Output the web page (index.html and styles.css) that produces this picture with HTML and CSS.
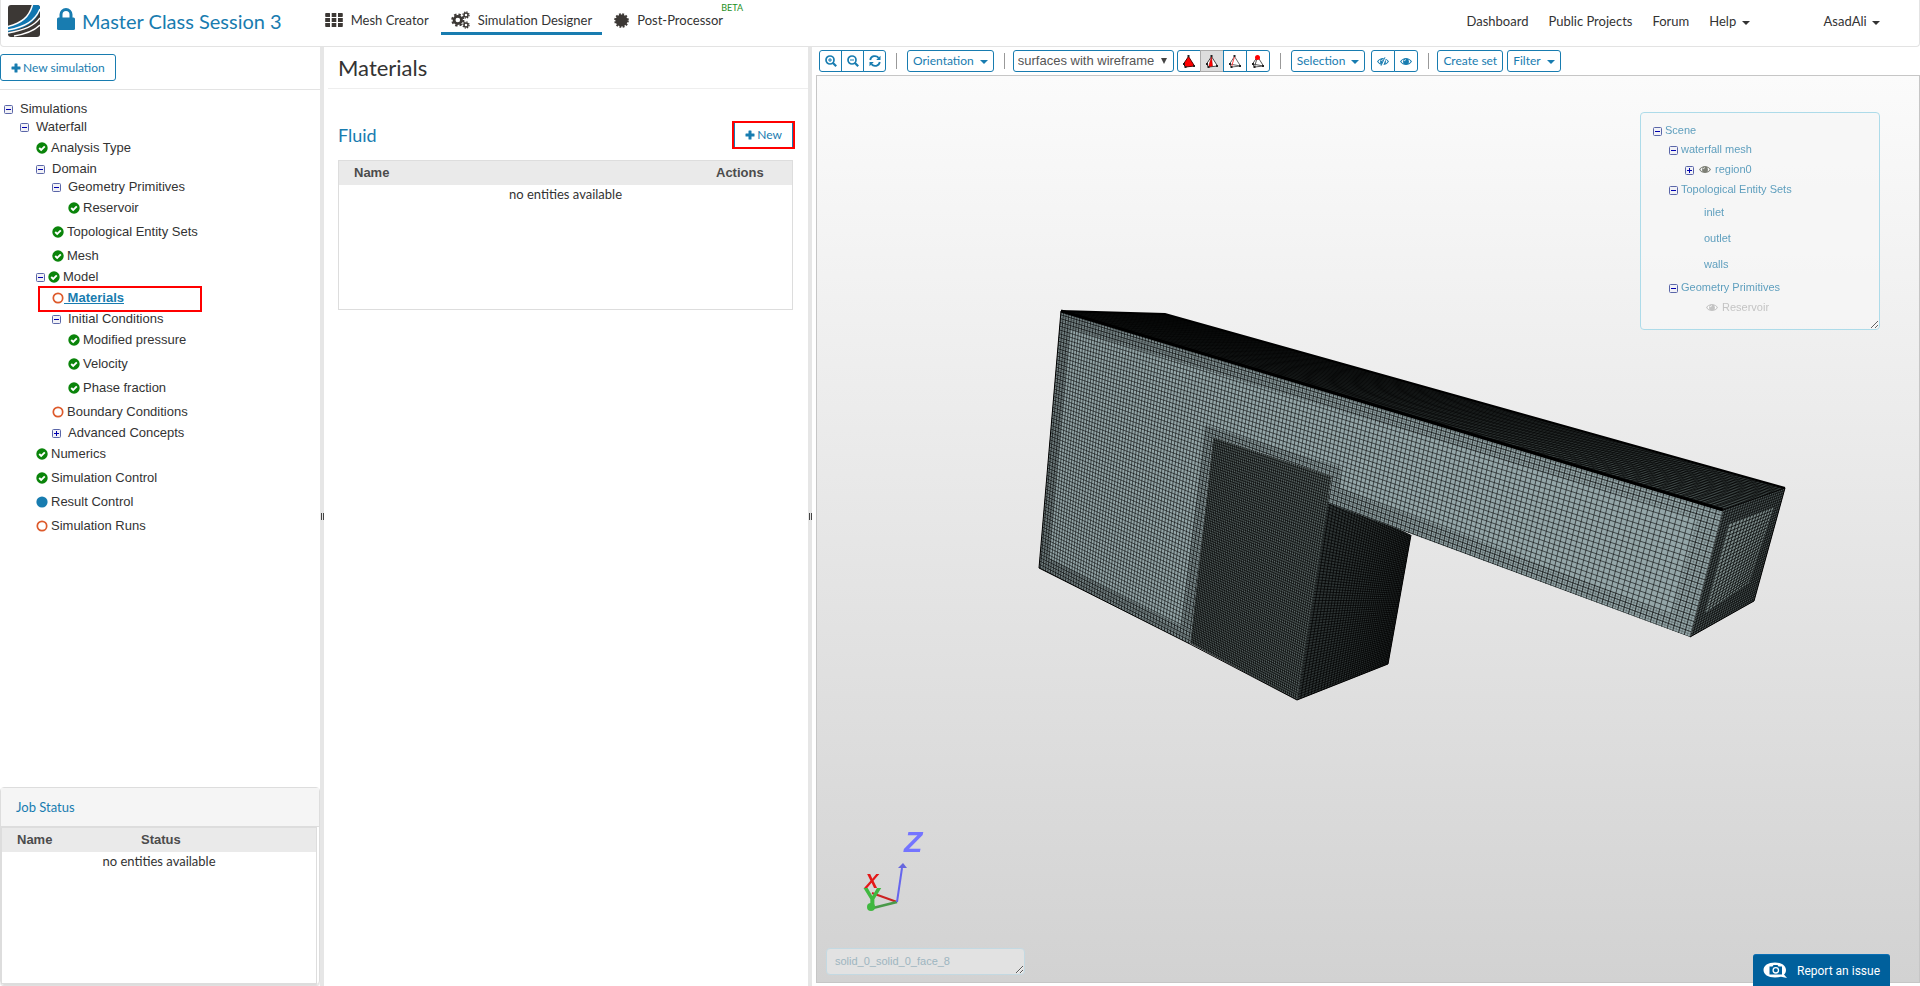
FILE: index.html
```
<!DOCTYPE html>
<html lang="en">
<head>
<meta charset="UTF-8">
<title>Master Class Session 3 - Simulation Designer</title>
<link rel="stylesheet" href="styles.css">
</head>
<body>

<svg class="sprite" aria-hidden="true">
	<symbol id="i-plus" viewBox="0 0 10 10"><path d="M4 0.5h2q.5 0 .5.5v2.5H9q.5 0 .5.5v2q0 .5-.5.5H6.500V9q0 .5-.5.5H4q-.5 0-.5-.5V6.500H1q-.5 0-.5-.5V4q0-.5.5-.5h2.500V1q0-.5.5-.5z"/></symbol>
	<symbol id="i-check" viewBox="0 0 12 12"><circle cx="6" cy="6" r="5.700"/><path d="M3.200 6l2 2 3.600-3.700" fill="none" stroke="#fff" stroke-width="1.900"/></symbol>
	<symbol id="i-open" viewBox="0 0 12 12"><circle cx="6" cy="6" r="4.700" fill="none" stroke="currentColor" stroke-width="1.700"/></symbol>
	<symbol id="i-dot" viewBox="0 0 12 12"><circle cx="6" cy="6" r="5.600"/></symbol>
	<symbol id="i-minusbox" viewBox="0 0 9 9"><rect x=".5" y=".5" width="8" height="8" rx="1" fill="#f1f1f6" stroke="#5a66a8"/><path d="M2 4.500h5" stroke="#0000b0"/></symbol>
	<symbol id="i-plusbox" viewBox="0 0 9 9"><rect x=".5" y=".5" width="8" height="8" rx="1" fill="#f1f1f6" stroke="#5a66a8"/><path d="M2 4.500h5M4.500 2v5" stroke="#0000b0"/></symbol>
	<symbol id="i-eye" viewBox="0 0 14 10"><path d="M0 5Q3 .8 7 .8T14 5Q11 9.200 7 9.200T0 5z"/><path d="M1.500 5Q2.500 3.300 4.200 2.600Q3 5 4.200 7.400Q2.500 6.700 1.500 5zM12.500 5Q11.500 3.300 9.800 2.600Q11 5 9.800 7.400Q11.500 6.700 12.500 5z" fill="#fff"/><path d="M5 4.600Q5.200 3 7 2.800" fill="none" stroke="#fff" stroke-width=".9"/></symbol>
	<symbol id="i-caret" viewBox="0 0 8 4"><path d="M0 0h8L4 4z"/></symbol>
</svg>

<header class="topbar">
	<a class="logo" href="#" aria-label="Home">
		<svg width="32" height="32" viewBox="0 0 32 32">
			<rect width="32" height="32" rx="3" fill="#3c3835"/>
			<path d="M25 0h4q3 0 3 3v3C27 18 16 24 0 27v-5C14 18 21 12 25 0z" fill="#0f76b0"/>
			<path d="M24.500 0C21 12 14 18 0 21.500" fill="none" stroke="#fff" stroke-width="1.500"/>
			<path d="M32 4C27 16 17 22 0 25" fill="none" stroke="#fff" stroke-width="1.500"/>
			<path d="M32 13C26 21 17 25 0 28" fill="none" stroke="#fff" stroke-width="1.300"/>
			<path d="M32 20C26 26 18 29 6 31" fill="none" stroke="#fff" stroke-width="1.500"/>
		</svg>
	</a>
	<svg class="lock" width="18" height="22" viewBox="0 0 18 22"><path d="M4 10V6.500a5 5 0 0 1 10 0V10" fill="none" stroke="currentColor" stroke-width="3"/><rect y="9.500" width="18" height="12.500" rx="1.500"/></svg>
	<h1 class="project">Master Class Session 3</h1>

	<nav class="tabs">
		<a href="#" class="tab">
			<svg width="18" height="14" viewBox="0 0 18 14"><path d="M1 0h3.500q.5 0 .5.5v3q0 .5-.5.5H1q-.8 0-.8-.7V.7Q.2 0 1 0zM6.700 0h4.600v4H6.700zM13 0h4q.8 0 .8.700v2.600q0 .7-.8.7h-4zM.2 5H5v4H.2zM6.700 5h4.600v4H6.700zM13 5h4.800v4H13zM.2 10H5v4H1q-.8 0-.8-.700zM6.700 10h4.600v4H6.700zM13 10h4.800v3.300q0 .7-.8.700h-4z"/></svg>
			Mesh Creator
		</a>
		<a href="#" class="tab active">
			<svg width="19" height="18" viewBox="0 0 19 18"><g fill="none" stroke="currentColor"><circle cx="6.800" cy="9" r="3.700" stroke-width="2.800"/><circle cx="6.800" cy="9" r="5.600" stroke-width="2" stroke-dasharray="2.400 1.998"/><circle cx="15" cy="4" r="2" stroke-width="1.500"/><circle cx="15" cy="4" r="3.100" stroke-width="1.200" stroke-dasharray="1.300 1.135"/><circle cx="15" cy="14" r="2" stroke-width="1.500"/><circle cx="15" cy="14" r="3.100" stroke-width="1.200" stroke-dasharray="1.300 1.135"/></g></svg>
			Simulation Designer
		</a>
		<a href="#" class="tab">
			<svg width="15" height="15" viewBox="0 0 16 16"><circle cx="8" cy="8" r="6.500"/><circle cx="8" cy="8" r="6.800" fill="none" stroke="currentColor" stroke-width="2" stroke-dasharray="2 1.560"/></svg>
			Post-Processor
			<sup class="beta">BETA</sup>
		</a>
	</nav>

	<nav class="links">
		<a href="#">Dashboard</a>
		<a href="#">Public Projects</a>
		<a href="#">Forum</a>
		<a href="#">Help <svg class="caret"><use href="#i-caret"/></svg></a>
		<a href="#" class="user">AsadAli <svg class="caret"><use href="#i-caret"/></svg></a>
	</nav>
</header>

<main class="panes">
	<aside class="sidebar">
		<div class="sidebar-head">
			<button class="btn btn-lg"><svg class="plus"><use href="#i-plus"/></svg>New simulation</button>
		</div>

		<ul class="tree">
			<li><div class="node"><svg class="tog"><use href="#i-minusbox"/></svg>Simulations</div>
				<ul>
					<li><div class="node"><svg class="tog"><use href="#i-minusbox"/></svg>Waterfall</div>
						<ul>
							<li><div class="leaf"><svg class="ok"><use href="#i-check"/></svg>Analysis Type</div></li>
							<li><div class="node"><svg class="tog"><use href="#i-minusbox"/></svg>Domain</div>
								<ul>
									<li><div class="node"><svg class="tog"><use href="#i-minusbox"/></svg>Geometry Primitives</div>
										<ul>
											<li><div class="leaf"><svg class="ok"><use href="#i-check"/></svg>Reservoir</div></li>
										</ul>
									</li>
									<li><div class="leaf"><svg class="ok"><use href="#i-check"/></svg>Topological Entity Sets</div></li>
									<li><div class="leaf"><svg class="ok"><use href="#i-check"/></svg>Mesh</div></li>
								</ul>
							</li>
							<li><div class="node model"><svg class="tog"><use href="#i-minusbox"/></svg><svg class="ok"><use href="#i-check"/></svg>Model</div>
								<ul>
									<li><div class="leaf marked"><svg class="todo"><use href="#i-open"/></svg><a href="#">&nbsp;Materials</a></div></li>
									<li><div class="node"><svg class="tog"><use href="#i-minusbox"/></svg>Initial Conditions</div>
										<ul>
											<li><div class="leaf"><svg class="ok"><use href="#i-check"/></svg>Modified pressure</div></li>
											<li><div class="leaf"><svg class="ok"><use href="#i-check"/></svg>Velocity</div></li>
											<li><div class="leaf"><svg class="ok"><use href="#i-check"/></svg>Phase fraction</div></li>
										</ul>
									</li>
									<li><div class="leaf"><svg class="todo"><use href="#i-open"/></svg>Boundary Conditions</div></li>
									<li><div class="node"><svg class="tog"><use href="#i-plusbox"/></svg>Advanced Concepts</div></li>
								</ul>
							</li>
							<li><div class="leaf"><svg class="ok"><use href="#i-check"/></svg>Numerics</div></li>
							<li><div class="leaf"><svg class="ok"><use href="#i-check"/></svg>Simulation Control</div></li>
							<li><div class="leaf"><svg class="info"><use href="#i-dot"/></svg>Result Control</div></li>
							<li><div class="leaf"><svg class="todo"><use href="#i-open"/></svg>Simulation Runs</div></li>
						</ul>
					</li>
				</ul>
			</li>
		</ul>

		<section class="jobs">
			<h2>Job Status</h2>
			<div class="jobs-body">
				<table class="grid">
					<thead><tr><th>Name</th><th class="status">Status</th></tr></thead>
					<tbody><tr><td colspan="2">no entities available</td></tr></tbody>
				</table>
			</div>
		</section>
	</aside>

	<div class="splitter"><span></span></div>

	<section class="details">
		<h2 class="title">Materials</h2>
		<div class="details-body">
			<div class="row">
				<h3>Fluid</h3>
				<button class="btn btn-new"><svg class="plus"><use href="#i-plus"/></svg>New</button>
			</div>
			<div class="box">
				<table class="grid">
					<thead><tr><th>Name</th><th class="actions">Actions</th></tr></thead>
					<tbody><tr><td colspan="2">no entities available</td></tr></tbody>
				</table>
			</div>
		</div>
	</section>

	<div class="splitter"><span></span></div>

	<section class="viewer">
		<div class="toolbar">
			<div class="group">
				<button class="btn ico" aria-label="Zoom in"><svg width="12" height="12" viewBox="0 0 12 12"><g fill="none" stroke="currentColor"><circle cx="5" cy="5" r="4" stroke-width="1.700"/><path d="M8 8l3.200 3.200" stroke-width="2.200"/><path d="M3 5h4M5 3v4"/></g></svg></button>
				<button class="btn ico" aria-label="Zoom out"><svg width="12" height="12" viewBox="0 0 12 12"><g fill="none" stroke="currentColor"><circle cx="5" cy="5" r="4" stroke-width="1.700"/><path d="M8 8l3.200 3.200" stroke-width="2.200"/><path d="M3 5h4"/></g></svg></button>
				<button class="btn ico" aria-label="Reset view"><svg width="12" height="12" viewBox="0 0 12 12"><g fill="none" stroke="currentColor" stroke-width="1.800"><path d="M1.200 5A4.800 4.800 0 0 1 9.600 2.800"/><path d="M10.800 7A4.800 4.800 0 0 1 2.400 9.200"/></g><path d="M11.500.7V5H7.200zM.5 11.300V7h4.300z"/></svg></button>
			</div>
			<i class="sep"></i>
			<button class="btn">Orientation<svg class="caret"><use href="#i-caret"/></svg></button>
			<i class="sep"></i>
			<select class="mode" aria-label="Render mode"><option>surfaces with wireframe</option></select>
			<div class="group picks">
				<button class="btn pick" aria-label="Pick volumes"><svg width="13" height="13" viewBox="0 0 13 13"><path d="M6.500 1.500L1.500 9l2 3 9-1z" fill="#f00" stroke="#500"/><path d="M1 8h2v2H1zM2.500 11h2v2h-2zM11 10h2v2h-2zM5.500 0h2v2h-2z" fill="#222"/></svg></button>
				<button class="btn pick pressed" aria-label="Pick faces"><svg width="13" height="13" viewBox="0 0 13 13"><path d="M6.500 1.500L1.500 9l2 3 9-1z" fill="#fff" stroke="#444"/><path d="M6.500 1.500L3.500 12l4-1z" fill="#f00" stroke="#900" stroke-width=".5"/><path d="M1 8h2v2H1zM2.500 11h2v2h-2zM11 10h2v2h-2zM5.500 0h2v2h-2z" fill="#222"/></svg></button>
				<button class="btn pick" aria-label="Pick edges"><svg width="13" height="13" viewBox="0 0 13 13"><path d="M6.500 1.500L1.500 9l2 3 9-1zM1.500 9l11 2" fill="#fff" stroke="#666"/><path d="M6.500 1.500L3.500 12" stroke="#f44"/><path d="M1 8h2v2H1zM2.500 11h2v2h-2zM11 10h2v2h-2zM5.500 0h2v2h-2z" fill="#222"/></svg></button>
				<button class="btn pick" aria-label="Pick nodes"><svg width="13" height="13" viewBox="0 0 13 13"><path d="M6.500 1.500L1.500 9l2 3 9-1zM1.500 9l11 2M6.500 1.500l-3 10.500" fill="#fff" stroke="#555"/><path d="M1 8h2v2H1zM2.500 11h2v2h-2zM11 10h2v2h-2z" fill="#222"/><circle cx="6.500" cy="2.500" r="2.500" fill="#f00"/></svg></button>
			</div>
			<i class="sep"></i>
			<button class="btn">Selection<svg class="caret"><use href="#i-caret"/></svg></button>
			<div class="group eyes">
				<button class="btn pick" aria-label="Hide selection"><svg width="12" height="9" viewBox="0 0 14 10"><use href="#i-eye" width="14" height="10"/><path d="M10 -1L5.500 11" stroke="#fff" stroke-width="2.400"/><path d="M9.300 0L4.700 10" stroke="currentColor" stroke-width="1.100"/></svg></button>
				<button class="btn pick" aria-label="Show all"><svg width="12" height="9"><use href="#i-eye"/></svg></button>
			</div>
			<i class="sep"></i>
			<button class="btn create">Create set</button>
			<button class="btn">Filter<svg class="caret"><use href="#i-caret"/></svg></button>
		</div>

		<div class="viewport">
			<canvas id="mesh"></canvas>

			<svg class="axes" width="70" height="90" viewBox="0 0 70 90">
				<path d="M37 70L12 61" stroke="#c22" stroke-width="2"/>
				<path d="M37 70L13 76" stroke="#4a9a4a" stroke-width="2.500"/>
				<path d="M37 70L42 36" stroke="#66e" stroke-width="2"/>
				<path d="M38 36l5-5 4 5z" fill="#66d"/>
				<text x="5" y="56" class="ax-x">X</text>
				<text x="3" y="75" class="ax-y">Y</text>
				<circle cx="11" cy="75" r="4" fill="#40b840"/>
				<text x="44" y="20" class="ax-z">Z</text>
			</svg>

			<div class="scene">
				<ul>
					<li><div class="s0"><svg class="tog"><use href="#i-minusbox"/></svg>Scene</div>
						<ul>
							<li><div><svg class="tog"><use href="#i-minusbox"/></svg>waterfall mesh</div>
								<ul>
									<li><div><svg class="tog"><use href="#i-plusbox"/></svg><svg class="eye"><use href="#i-eye"/></svg>region0</div></li>
								</ul>
							</li>
							<li><div><svg class="tog"><use href="#i-minusbox"/></svg>Topological Entity Sets</div>
								<ul class="sets">
									<li>inlet</li>
									<li>outlet</li>
									<li>walls</li>
								</ul>
							</li>
							<li><div><svg class="tog"><use href="#i-minusbox"/></svg>Geometry Primitives</div>
								<ul class="prims">
									<li><div class="off"><svg class="eye"><use href="#i-eye"/></svg>Reservoir</div></li>
								</ul>
							</li>
						</ul>
					</li>
				</ul>
			</div>

			<textarea class="picked" aria-label="Picked entity" readonly>solid_0_solid_0_face_8</textarea>
		</div>
	</section>
</main>

<button class="report">
	<svg width="24" height="17" viewBox="0 0 24 17"><path d="M12 .5C18.500.5 23 3.500 23 8c0 2-.8 3.500-2 4.600L24 16l-6-1.200c-1.700.5-3.700.7-6 .7C5 15.500.5 12.500.5 8S5 .5 12 .5z" fill="#fff"/><path d="M6.500 4.500h3l1-1.500h4l1 1.500H19v8H6.500z" fill="#00609c"/><circle cx="12.800" cy="8.300" r="2.700" fill="none" stroke="#fff" stroke-width="1.300"/></svg>
	Report an issue
</button>

<script src="mesh.js"></script>
</body>
</html>
```
FILE: styles.css
```
*,
*::after {
	box-sizing: border-box;
}

html,
body {
	height: 100%;
	margin: 0;
}

body {
	display: flex;
	flex-direction: column;
	overflow: hidden;
	background: #fff;
	color: #333;
	font: 13px/20px Lato, sans-serif;
}

a {
	color: inherit;
	text-decoration: none;
}

h1, h2, h3, ul {
	margin: 0;
	padding: 0;
	font-weight: normal;
	list-style: none;
}

svg {
	flex: none;
	fill: currentColor;
}

.sprite {
	position: absolute;
	width: 0;
	height: 0;
}

.caret {
	width: 8px;
	height: 4px;
}

/* top bar */
.topbar {
	flex: none;
	display: flex;
	height: 47px;
	padding: 0 39px 0 7px;
	border: 1px solid #e3e3e3;
	border-top: 0;
	border-radius: 0 0 4px 4px;
}

.logo {
	height: 32px;
	margin-top: 5px;
}

.lock {
	margin: 8px 7px 0 17px;
	color: #187cb0;
}

.project {
	color: #187cb0;
	font-size: 20px;
	line-height: 42px;
}

.tabs {
	display: flex;
	gap: 2px;
	height: 35px;
	margin-left: 33px;
}

.tab {
	position: relative;
	display: flex;
	align-items: center;
	gap: 8px;
	padding: 8px 10px 0;
	border-bottom: 3px solid transparent;
}

.tab svg {
	color: #3c3835;
}

.active {
	border-color: #187cb0;
}

.beta {
	position: absolute;
	top: 3px;
	right: -10px;
	color: #1c8f1c;
	font-size: 9px;
	line-height: 10px;
}

.links {
	display: flex;
	gap: 20px;
	margin-left: auto;
	line-height: 42px;
}

.links .caret {
	margin: 0 0 1px 2px;
}

.user {
	margin-left: 54px;
}

/* buttons */
.btn {
	display: flex;
	align-items: center;
	justify-content: center;
	height: 22px;
	padding: 0 5px;
	border: 1px solid #187cb0;
	border-radius: 3px;
	background: #fff;
	color: #187cb0;
	font: 12px/18px Lato, sans-serif;
	white-space: nowrap;
}

.btn .caret {
	margin: 2px 0 0 6px;
}

.plus {
	width: 10px;
	height: 10px;
	margin-right: 2px;
}

.btn-lg {
	height: 27px;
	padding: 0 10px;
}

.btn-new {
	height: 24px;
	padding: 0 10px;
	border-width: 0 1px;
	border-radius: 0;
	outline: 2px solid #f00;
}

/* panes */
.panes {
	flex: 1;
	display: flex;
	min-height: 0;
}

.sidebar {
	flex: none;
	display: flex;
	flex-direction: column;
	width: 320px;
}

.sidebar-head {
	height: 43px;
	padding-top: 7px;
	border-bottom: 1px solid #e3e3e3;
}

.splitter {
	flex: none;
	display: flex;
	align-items: center;
	justify-content: center;
	width: 4px;
	background: #e6e6e6;
}

.splitter span {
	width: 3px;
	height: 7px;
	border: solid #444;
	border-width: 0 1px;
}

/* simulation tree */
.tree {
	flex: 1;
	padding: 10px 0 0 4px;
	font: 13px/18px "Liberation Sans", Arial, sans-serif;
}

.tree ul {
	padding-left: 16px;
}

.node,
.leaf {
	display: flex;
	align-items: center;
	height: 18px;
}

.leaf {
	height: 24px;
}

.tog {
	width: 9px;
	height: 9px;
	margin: 1px 7px 0 0;
}

.model .tog {
	margin-right: 3px;
}

.ok,
.todo,
.info {
	width: 12px;
	height: 12px;
	margin-right: 3px;
	color: #0a840a;
}

.todo {
	color: #dd5a2b;
}

.info {
	color: #187cb0;
}

.marked {
	position: relative;
}

.marked::after {
	content: "";
	position: absolute;
	left: -14px;
	top: 0;
	width: 164px;
	height: 26px;
	border: 2px solid #f00;
	pointer-events: none;
}

.marked svg {
	margin-right: 0;
}

.marked a {
	color: #187cb0;
	font-weight: bold;
	text-decoration: underline;
}

/* tables */
.grid {
	width: 100%;
	border-collapse: collapse;
}

.grid th {
	height: 24px;
	padding: 0 15px;
	background: #eaeaea;
	color: #4c4c4c;
	font: bold 13px/20px "Liberation Sans", Arial, sans-serif;
	text-align: left;
}

.grid td {
	padding: 0;
	line-height: 18px;
	text-align: center;
}

.grid .actions {
	width: 91px;
}

.grid .status {
	width: 190px;
}

.jobs {
	margin-bottom: 1px;
	border: 1px solid #ddd;
	border-radius: 4px;
	box-shadow: 0 1px 1px #ddd;
}

.jobs h2 {
	height: 39px;
	padding: 0 15px;
	border-bottom: 1px solid #ddd;
	background: #f5f5f5;
	color: #187cb0;
	font-size: 13px;
	line-height: 39px;
}

.jobs-body {
	height: 157px;
	margin-right: 2px;
	border: 1px solid #ddd;
}

/* details */
.details {
	flex: none;
	width: 484px;
	padding-left: 4px;
}

.title {
	height: 42px;
	padding-left: 10px;
	border-bottom: 1px solid #eee;
	font-size: 22px;
	line-height: 42px;
}

.details-body {
	padding: 34px 15px 0 10px;
}

.row {
	display: flex;
	align-items: center;
	justify-content: space-between;
	height: 24px;
	margin-bottom: 13px;
}

.row h3 {
	color: #187cb0;
	font-size: 18px;
}

.box {
	height: 150px;
	border: 1px solid #ddd;
}

/* viewer */
.viewer {
	flex: 1;
	display: flex;
	flex-direction: column;
	min-width: 0;
	padding: 0 0 3px 4px;
}

.toolbar {
	flex: none;
	display: flex;
	align-items: center;
	height: 28px;
	padding: 0 3px;
}

.group {
	display: flex;
}

.group .btn {
	margin-right: -1px;
	padding: 0;
	border-radius: 0;
}

.group .btn:first-child {
	border-radius: 3px 0 0 3px;
}

.group .btn:last-child {
	margin-right: 0;
	border-radius: 0 3px 3px 0;
}

.ico {
	width: 23px;
}

.pick {
	width: 24px;
}

.group .pressed {
	border-color: #aaa;
	background: #ddd;
}

.sep {
	width: 1px;
	height: 16px;
	margin: 0 10px;
	background: #999;
}

.mode {
	height: 22px;
	width: 161px;
	margin: 0 3px 0 -2px;
	padding: 0 4px;
	border: 1px solid #187cb0;
	border-radius: 3px;
	appearance: none;
	background: #fff url("data:image/svg+xml,%3Csvg xmlns='http://www.w3.org/2000/svg' width='6' height='6'%3E%3Cpath d='M0 0h6L3 6z' fill='%23444'/%3E%3C/svg%3E") no-repeat right 6px center;
	color: #555;
	font: 13px/18px "Liberation Sans", Arial, sans-serif;
}

.eyes {
	margin-left: 6px;
}

.create {
	margin: 0 4px 0 -2px;
}

.viewport {
	flex: 1;
	position: relative;
	min-height: 0;
	border: 1px solid #c6c6c6;
	background: linear-gradient(#fbfbfb, #d2d2d2);
}

#mesh {
	position: absolute;
	width: 100%;
	height: 100%;
}

.axes {
	position: absolute;
	left: 43px;
	bottom: 60px;
}

.axes text {
	font-family: "Liberation Sans", Arial, sans-serif;
	font-weight: bold;
}

.ax-x {
	fill: #e41818;
	font-size: 20px;
	font-style: italic;
}

.ax-y {
	fill: #40b840;
	font-size: 28px;
}

.ax-z {
	fill: #7474ff;
	font-size: 30px;
	font-style: italic;
}

/* floating scene panel, user resizable */
.scene {
	position: absolute;
	top: 36px;
	right: 39px;
	width: 240px;
	height: 218px;
	padding: 8px 12px;
	overflow: hidden;
	resize: both;
	border: 1px solid #addbe9;
	border-radius: 4px;
	background: rgba(247, 247, 247, .7);
	color: #5f9fbe;
	font: 11px/20px "Liberation Sans", Arial, sans-serif;
}

.scene ul ul {
	padding-left: 16px;
}

.scene div {
	display: flex;
	align-items: center;
	height: 20px;
}

.scene .s0 {
	height: 18px;
}

.scene .tog {
	margin: 2px 3px 0 0;
}

.scene ul.sets {
	padding-left: 35px;
	line-height: 26px;
}

.scene ul.prims {
	padding-left: 35px;
}

.eye {
	width: 12px;
	height: 9px;
	margin: 0 4px 0 2px;
	color: #7d7f75;
}

.off,
.off .eye {
	color: #c4c4c4;
}

.picked {
	position: absolute;
	left: 9px;
	bottom: 7px;
	width: 199px;
	height: 27px;
	padding: 4px 8px;
	overflow: hidden;
	resize: both;
	border: 1px solid #c3d9e2;
	border-radius: 4px;
	background: #e2e2e2;
	color: #9db5c0;
	font: 11px/17px "Liberation Sans", Arial, sans-serif;
}

.report {
	position: fixed;
	right: 30px;
	bottom: 0;
	display: flex;
	align-items: center;
	gap: 10px;
	height: 32px;
	padding: 0 10px;
	border: 0;
	border-top: 1px solid #0a6fb5;
	border-radius: 3px 3px 0 0;
	background: #00609c;
	color: #fff;
	font: 12px/18px Roboto, sans-serif;
}
```
FILE: mesh.js
```
// size of the frame that the points below are given in
var FRAME_W = 1102;
var FRAME_H = 906;

var canvas = document.getElementById('mesh');
var ctx = canvas.getContext('2d');

// maps the unit square on the quad p0 (0,0), p1 (1,0), p2 (1,1), p3 (0,1) in perspective
function projector(q)
{
	var dx1 = q[1][0] - q[2][0], dx2 = q[3][0] - q[2][0];
	var dy1 = q[1][1] - q[2][1], dy2 = q[3][1] - q[2][1];
	var sx = q[0][0] - q[1][0] + q[2][0] - q[3][0];
	var sy = q[0][1] - q[1][1] + q[2][1] - q[3][1];
	var det = dx1 * dy2 - dx2 * dy1;
	var g = (sx * dy2 - dx2 * sy) / det;
	var h = (dx1 * sy - sx * dy1) / det;
	var a = q[1][0] - q[0][0] + g * q[1][0];
	var b = q[3][0] - q[0][0] + h * q[3][0];
	var d = q[1][1] - q[0][1] + g * q[1][1];
	var e = q[3][1] - q[0][1] + h * q[3][1];
	return function (u, v) {
		var w = g * u + h * v + 1;
		return [(a * u + b * v + q[0][0]) / w, (d * u + e * v + q[0][1]) / w];
	};
}

function trace(points)
{
	ctx.beginPath();
	for (var i = 0; i < points.length; ++i) {
		ctx.lineTo(points[i][0], points[i][1]);
	}
	ctx.closePath();
}

// grid lines over u0..u1, v0..v1
function lines(map, u0, u1, nu, v0, v1, nv, color, width)
{
	var i, p, q;
	ctx.strokeStyle = color;
	ctx.lineWidth = width;
	ctx.beginPath();
	for (i = 0; i <= nu; ++i) {
		p = map(u0 + (u1 - u0) * i / nu, v0);
		q = map(u0 + (u1 - u0) * i / nu, v1);
		ctx.moveTo(p[0], p[1]);
		ctx.lineTo(q[0], q[1]);
	}
	for (i = 0; i <= nv; ++i) {
		p = map(u0, v0 + (v1 - v0) * i / nv);
		q = map(u1, v0 + (v1 - v0) * i / nv);
		ctx.moveTo(p[0], p[1]);
		ctx.lineTo(q[0], q[1]);
	}
	ctx.stroke();
}

function face(points, fill, nu, nv, color, width)
{
	ctx.save();
	trace(points);
	ctx.fillStyle = fill;
	ctx.fill();
	ctx.clip();
	lines(projector(points), 0, 1, nu, 0, 1, nv, color, width);
	ctx.restore();
}

function edge(points, width)
{
	ctx.strokeStyle = '#000';
	ctx.lineWidth = width;
	ctx.beginPath();
	for (var i = 0; i < points.length; ++i) {
		ctx.lineTo(points[i][0], points[i][1]);
	}
	ctx.stroke();
}

function draw()
{
	var w = canvas.clientWidth, h = canvas.clientHeight;
	var s = Math.min(w / FRAME_W, h / FRAME_H);
	canvas.width = w;
	canvas.height = h;
	ctx.setTransform(s, 0, 0, s, (w - FRAME_W * s) / 2, (h - FRAME_H * s) / 2);

	// top, pillar sides, outlet
	face([[244, 235], [348, 238], [968, 412], [906, 434]], '#4a5554', 24, 200, 'rgba(0,0,0,.7)', 1);
	face([[511, 418], [594, 459], [571, 588], [480, 624]], '#2e3535', 38, 70, 'rgba(0,0,0,.7)', 1);
	face([[396, 361], [515, 400], [480, 624], [373, 567]], '#5b6766', 60, 90, 'rgba(0,0,0,.66)', 1);
	face([[906, 434], [968, 412], [937, 525], [873, 561]], '#4f5a5a', 26, 44, 'rgba(0,0,0,.65)', 1);
	face([[912, 448], [957, 431], [932, 507], [888, 537]], '#7c8b8a', 14, 24, 'rgba(0,0,0,.72)', 1);

	// front: the arm quad is extended downwards to cover the tank
	var front = [[244, 235], [906, 434], [873, 561], [511, 427], [515, 400], [396, 361], [373, 568], [222, 492]];
	var map = projector([[244, 235], [906, 434], [873, 561], [236, 324]]);
	ctx.save();
	trace(front);
	ctx.fillStyle = '#94a6a8';
	ctx.fill();
	ctx.clip();
	lines(map, 0, 1, 165, 0, 4, 96, 'rgba(0,0,0,.72)', 0.8);
	ctx.restore();

	// refined layer that follows the outline
	ctx.save();
	trace(front);
	ctx.clip();
	var inner = [[253, 253], [880, 443], [854, 538], [524, 412], [524, 391], [388, 349], [364, 550], [232, 482]];
	ctx.beginPath();
	ctx.rect(0, 0, FRAME_W, FRAME_H);
	for (var i = 0; i < inner.length; ++i) {
		ctx[i ? 'lineTo' : 'moveTo'](inner[i][0], inner[i][1]);
	}
	ctx.closePath();
	ctx.clip('evenodd');
	lines(map, 0, 1, 330, 0, 4, 192, 'rgba(0,0,0,.28)', 0.8);
	ctx.restore();

	edge([[244, 235], [348, 238], [968, 412]], 2);
	edge([[244, 235], [906, 434]], 3);
	edge([[906, 434], [968, 412], [937, 525], [873, 561]], 1);
	edge([[222, 492], [373, 568], [480, 624], [571, 588], [594, 459]], 1);
	edge([[244, 235], [222, 492]], 1);
}

draw();
window.addEventListener('resize', draw);
```
